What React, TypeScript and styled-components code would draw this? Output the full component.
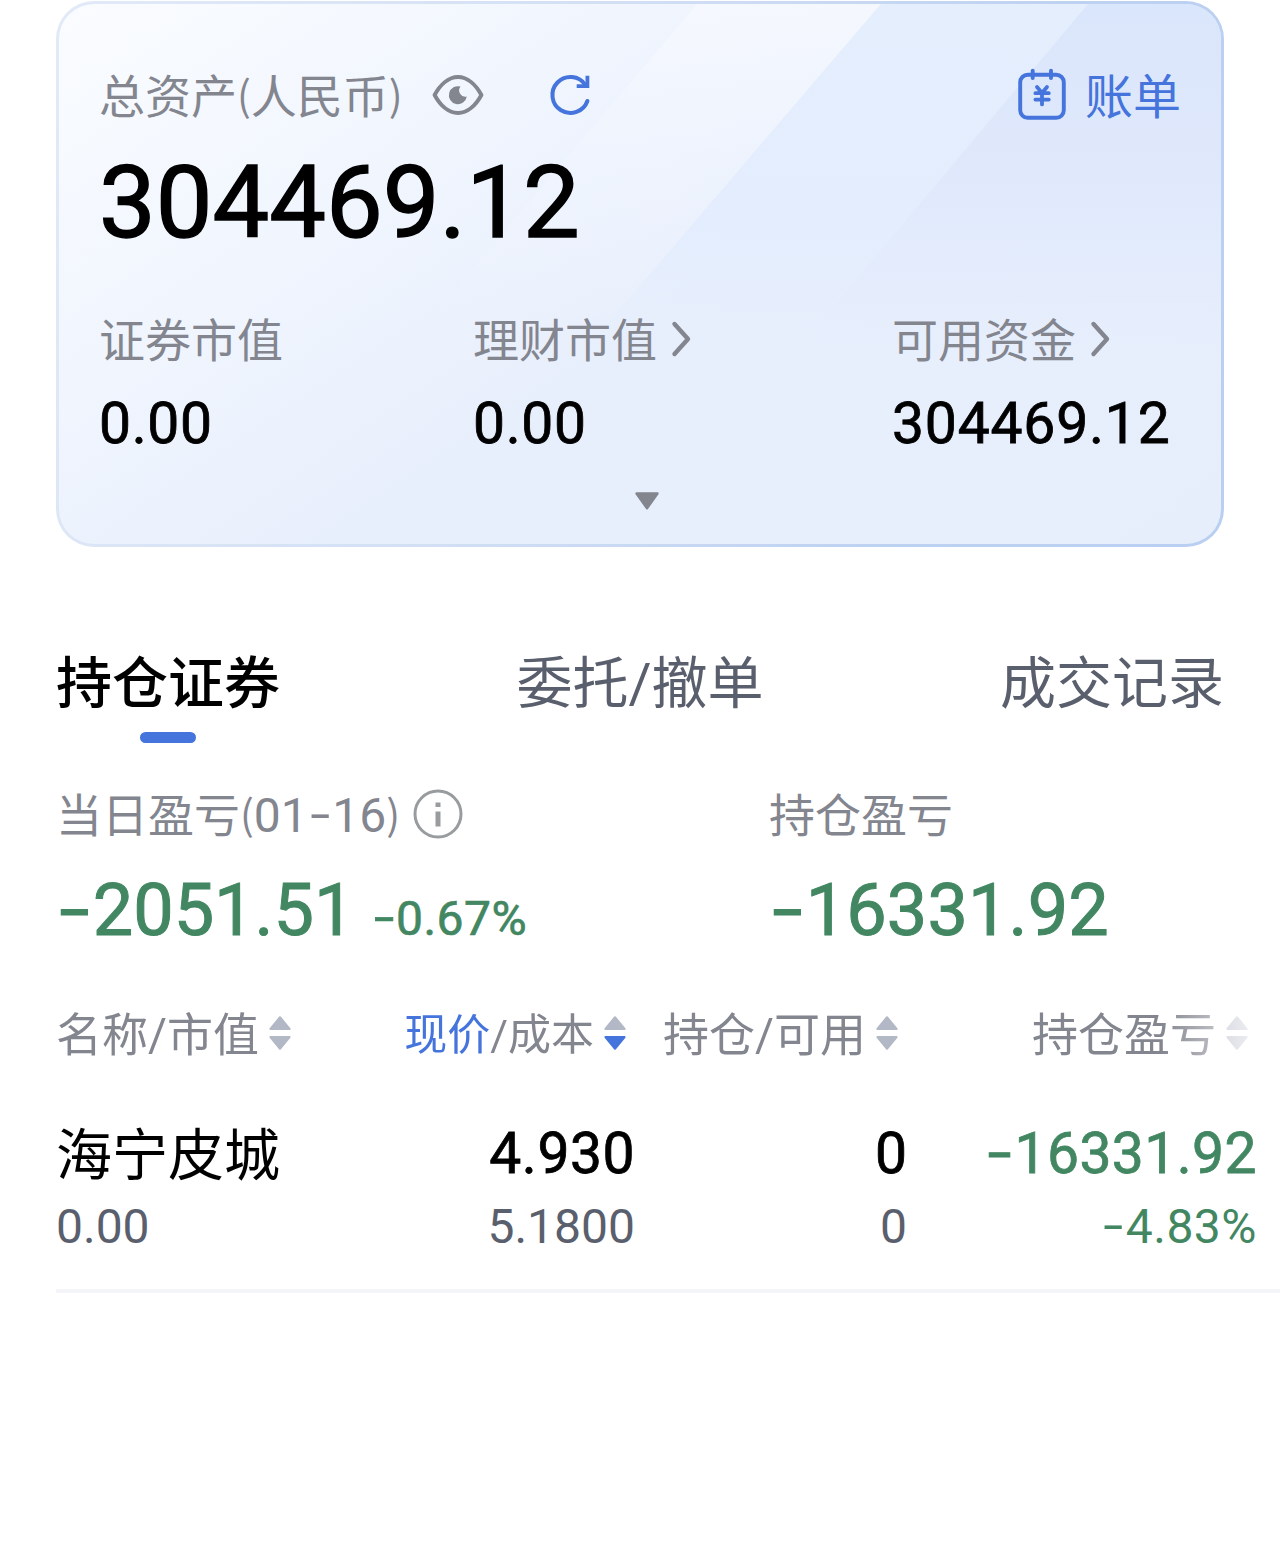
import React from "react";
import styled, { createGlobalStyle, css } from "styled-components";

const colors = {
  ink: "#000000",
  slate: "#5a5f6d",
  label: "#83858f",
  blue: "#4474dc",
  green: "#428762",
  sort: "#b3b8c6",
  info: "#999c9f",
};

const cjk = `"Noto Sans CJK SC", "Noto Sans", sans-serif`;
const din = `Roboto, "Noto Sans CJK SC", sans-serif`;

const GlobalStyle = createGlobalStyle`
  * { box-sizing: border-box; }
  html, body { margin: 0; background: #fff; }
  body { font-family: ${cjk}; overflow-x: hidden; }
`;

const Page = styled.main`
  width: 1280px;
  height: 1566px;
  padding-top: 1px;
  overflow: hidden;
  background: #fff;
`;

/* ---------- text ---------- */

const Label = styled.div<{ $size?: number; $color?: string }>`
  display: flex;
  align-items: center;
  height: 60px;
  padding-bottom: 3px;
  font: 400 ${(p) => p.$size ?? 46}px/60px ${cjk};
  color: ${(p) => p.$color ?? colors.label};
  white-space: nowrap;
`;

const Num = styled.span<{
  $size: number;
  $line: number;
  $light?: boolean;
  $color?: string;
  $track?: number;
}>`
  display: block;
  padding-top: ${(p) => (p.$size > 50 ? 1 : 0)}px;
  margin-bottom: ${(p) => (p.$size > 50 ? -1 : 0)}px;
  font: 400 ${(p) => p.$size}px/${(p) => p.$line}px ${din};
  letter-spacing: ${(p) => p.$track ?? 0}px;
  color: ${(p) => p.$color ?? colors.ink};
  -webkit-text-stroke: ${(p) => (p.$light ? "0" : "0.014em")} currentColor;
  white-space: nowrap;
`;

const Dash = styled.span`
  display: inline-block;
  width: 0.51em;
  text-align: center;
  letter-spacing: 0;
  transform: translateY(-0.02em) scaleX(1.5);
`;

const Paren = styled.span`
  display: inline-block;
  font-size: 41px;
  line-height: 0;
  transform: translateY(-2px);
`;

const Slash = styled.span`
  font-family: ${din};
  line-height: 0;
`;

function Signed({ value }: { value: string }) {
  return value.startsWith("-") ? (
    <>
      <Dash>-</Dash>
      {value.slice(1)}
    </>
  ) : (
    <>{value}</>
  );
}

/* ---------- asset card ---------- */

const Card = styled.section`
  position: relative;
  width: 1168px;
  height: 546px;
  margin-left: 56px;
  padding: 60px 40px 0 40px;
  border: 3px solid transparent;
  border-radius: 38px;
  background:
    linear-gradient(146deg, #fafcff 0%, #f1f6fe 28%, #e8effc 54%, #e6eefc 100%) padding-box,
    linear-gradient(110deg, #e2eaf8 0%, #d3e0f4 40%, #bdd1f1 75%, #b9cff2 100%) border-box;
`;

const Streak = styled.div<{ $shape: string; $fill: string }>`
  position: absolute;
  inset: 0;
  border-radius: 35px;
  clip-path: polygon(${(p) => p.$shape});
  background: ${(p) => p.$fill};
`;

const CardBody = styled.div`
  position: relative;
  display: flex;
  flex-direction: column;
`;

const CardHead = styled.header`
  display: flex;
  align-items: center;
  height: 60px;
`;

const Bill = styled.div`
  display: flex;
  align-items: center;
  gap: 18px;
  margin-left: auto;
`;

const Total = styled.div`
  margin-top: 28px;
  padding-left: 0;
`;

const Stats = styled.div`
  display: grid;
  grid-template-columns: 374px 419px auto;
  margin-top: 56px;
`;

const Stat = styled.div`
  display: flex;
  flex-direction: column;
  gap: 25px;
`;

const Expand = styled.div`
  display: flex;
  margin: 39px 0 0 536px;
`;

const Icon = styled.svg<{ $ml?: number; $mt?: number }>`
  display: block;
  flex: none;
  margin-left: ${(p) => p.$ml ?? 0}px;
  margin-top: ${(p) => p.$mt ?? 0}px;
  overflow: visible;
`;

function EyeIcon() {
  return (
    <Icon $ml={29} $mt={2} width="52" height="44" viewBox="0 0 52 44" fill="none">
      <path
        d="M2.600 22C8 12 16.500 4 26 4S44 12 49.400 22C44 32 35.500 40 26 40S8 32 2.600 22Z"
        stroke={colors.label}
        strokeWidth="4"
        strokeLinejoin="round"
      />
      <path d="M28.600 13.600A6.200 6.200 0 0 0 34.800 23.600A9 9 0 1 1 28.600 13.600Z" fill={colors.label} />
    </Icon>
  );
}

function RefreshIcon() {
  return (
    <Icon $ml={64} $mt={2} width="44" height="44" viewBox="0 0 44 44" fill="none" stroke={colors.blue}>
      <path d="M39.400 28A18 18 0 1 1 37.400 12" strokeWidth="4" strokeLinecap="round" />
      <path d="M39.400 4.600V13.200H30.600" strokeWidth="3.800" strokeLinecap="square" />
    </Icon>
  );
}

function BillIcon() {
  return (
    <Icon width="50" height="54" viewBox="0 0 50 54" fill="none" stroke={colors.blue} strokeLinecap="round">
      <rect x="3.200" y="7.800" width="43.600" height="43" rx="7.500" strokeWidth="3.900" />
      <path d="M15.700 3.600V11M34 3.600V11" strokeWidth="3.900" />
      <path
        d="M20 20L25 26L30 20M25 26V37.400M18.400 26.200H31.800M18.400 32.600H31.800"
        strokeWidth="3.800"
        strokeLinejoin="round"
      />
    </Icon>
  );
}

function Chevron() {
  return (
    <Icon $ml={13} $mt={5} width="24" height="38" viewBox="0 0 24 38" fill="none">
      <path d="M4.500 4L18 19L4.500 34" stroke={colors.label} strokeWidth="4.400" strokeLinecap="round" strokeLinejoin="round" />
    </Icon>
  );
}

/* ---------- tabs ---------- */

const Tabs = styled.nav`
  display: flex;
  justify-content: space-between;
  align-items: flex-start;
  width: 1168px;
  margin: 97px 0 0 56px;
`;

const Tab = styled.div<{ $active?: boolean }>`
  display: flex;
  flex-direction: column;
  align-items: center;
  height: 99px;
  font: 400 56px/70px ${cjk};
  color: ${colors.slate};
  white-space: nowrap;
  ${(p) =>
    p.$active &&
    css`
      font-weight: 500;
      color: ${colors.ink};
      &::after {
        content: "";
        width: 56px;
        height: 11px;
        margin-top: 18px;
        border-radius: 6px;
        background: ${colors.blue};
      }
    `}
`;

/* ---------- profit and loss ---------- */

const Profit = styled.section`
  display: grid;
  grid-template-columns: 713px auto;
  margin: 40px 0 0 56px;
`;

const ProfitCell = styled.div`
  display: flex;
  flex-direction: column;
  gap: 27px;
`;

const ProfitValue = styled.div`
  display: flex;
  align-items: baseline;
  gap: 17px;
  height: 80px;
`;

const DateText = styled.span`
  font-family: ${din};
  font-size: 48px;
  line-height: 0;
`;

function InfoIcon() {
  return (
    <Icon $ml={13} $mt={4} width="50" height="50" viewBox="0 0 50 50" fill="none">
      <circle cx="25" cy="25" r="23" stroke={colors.info} strokeWidth="3" />
      <path d="M22.500 13.500H27.500V18H22.500ZM22.500 22.600H27.500V37.600H22.500Z" fill={colors.info} />
    </Icon>
  );
}

/* ---------- holdings table ---------- */

const Table = styled.section`
  margin: 52px 0 0 56px;
  border-bottom: 4px solid #f4f5f9;
`;

const gridColumns = css`
  display: grid;
  grid-template-columns: 305px 274px 272px 350px;
`;

const HeadRow = styled.div`
  ${gridColumns}
  mask-image: linear-gradient(90deg, #000 1104px, transparent 1224px);
`;

const HeadCell = styled.div<{ $left?: boolean }>`
  display: flex;
  align-items: center;
  justify-content: ${(p) => (p.$left ? "flex-start" : "flex-end")};
  gap: 10px;
  padding-right: 9px;
`;

const Active = styled.span`
  color: ${colors.blue};
`;

const BodyRow = styled.div`
  ${gridColumns}
  height: 227px;
  padding-top: 56px;
`;

const BodyCell = styled.div<{ $left?: boolean }>`
  display: flex;
  flex-direction: column;
  align-items: ${(p) => (p.$left ? "flex-start" : "flex-end")};
  gap: 9px;
`;

const StockName = styled.span`
  margin-bottom: 4px;
  font: 400 56px/66px ${cjk};
  color: ${colors.ink};
`;

function SortIcon({ down }: { down?: boolean }) {
  return (
    <Icon $mt={2} width="22" height="34" viewBox="0 0 22 34" strokeWidth="2" strokeLinejoin="round">
      <path d="M11 1.200L20.600 13H1.400Z" fill={colors.sort} stroke={colors.sort} />
      <path
        d="M11 32.800L20.600 21H1.400Z"
        fill={down ? colors.blue : colors.sort}
        stroke={down ? colors.blue : colors.sort}
      />
    </Icon>
  );
}

export default function App() {
  return (
    <Page>
      <GlobalStyle />
      <Card>
        <Streak
          $shape="638px 0, 822px 0, 394px 500px, 214px 500px"
          $fill="linear-gradient(180deg, rgba(247,249,255,.75) 0, rgba(240,245,254,.6) 150px, rgba(234,241,253,0) 320px)"
        />
        <Streak
          $shape="822px 0, 1029px 0, 608px 500px, 394px 500px"
          $fill="linear-gradient(180deg, #e4eefd 0, #e3edfd 220px, rgba(230,238,252,0) 350px)"
        />
        <Streak
          $shape="1029px 0, 100% 0, 100% 400px, 692px 400px"
          $fill="linear-gradient(180deg, #dae6fb 0, #dfe8fb 140px, #e2ebfc 230px, rgba(231,238,252,0) 350px)"
        />
        <CardBody>
          <CardHead>
            <Label><span>总资产<Paren>(</Paren>人民币<Paren>)</Paren></span></Label>
            <EyeIcon />
            <RefreshIcon />
            <Bill>
              <BillIcon />
              <Label $size={48} $color={colors.blue}>账单</Label>
            </Bill>
          </CardHead>
          <Total>
            <Num $size={101} $line={100}>304469.12</Num>
          </Total>
          <Stats>
            <Stat>
              <Label>证券市值</Label>
              <Num $size={57} $line={60} $track={0.6}>0.00</Num>
            </Stat>
            <Stat>
              <Label>理财市值<Chevron /></Label>
              <Num $size={57} $line={60} $track={0.6}>0.00</Num>
            </Stat>
            <Stat>
              <Label>可用资金<Chevron /></Label>
              <Num $size={57} $line={60} $track={0.8}>304469.12</Num>
            </Stat>
          </Stats>
          <Expand>
            <Icon width="24" height="18" viewBox="0 0 24 18">
              <path
                d="M1.500 1.500H22.500L12 16.300Z"
                fill={colors.label}
                stroke={colors.label}
                strokeWidth="2.400"
                strokeLinejoin="round"
              />
            </Icon>
          </Expand>
        </CardBody>
      </Card>

      <Tabs>
        <Tab $active>持仓证券</Tab>
        <Tab><span>委托<Slash>/</Slash>撤单</span></Tab>
        <Tab>成交记录</Tab>
      </Tabs>

      <Profit>
        <ProfitCell>
          <Label>
            <span>当日盈亏<Paren>(</Paren><DateText>01<Dash>-</Dash>16</DateText><Paren>)</Paren></span>
            <InfoIcon />
          </Label>
          <ProfitValue>
            <Num $size={72} $line={80} $color={colors.green}><Signed value="-2051.51" /></Num>
            <Num $size={48} $line={80} $track={0.5} $color={colors.green}><Signed value="-0.67%" /></Num>
          </ProfitValue>
        </ProfitCell>
        <ProfitCell>
          <Label>持仓盈亏</Label>
          <ProfitValue>
            <Num $size={72} $line={80} $track={0.1} $color={colors.green}><Signed value="-16331.92" /></Num>
          </ProfitValue>
        </ProfitCell>
      </Profit>

      <Table>
        <HeadRow>
          <HeadCell $left><Label><span>名称<Slash>/</Slash>市值</span></Label><SortIcon /></HeadCell>
          <HeadCell><Label $size={43}><span><Active>现价</Active><Slash>/</Slash>成本</span></Label><SortIcon down /></HeadCell>
          <HeadCell><Label><span>持仓<Slash>/</Slash>可用</span></Label><SortIcon /></HeadCell>
          <HeadCell><Label>持仓盈亏</Label><SortIcon /></HeadCell>
        </HeadRow>
        <BodyRow>
          <BodyCell $left>
            <StockName>海宁皮城</StockName>
            <Num $size={48} $line={60} $light $color={colors.slate}>0.00</Num>
          </BodyCell>
          <BodyCell>
            <Num $size={57} $line={70} $track={0.5}>4.930</Num>
            <Num $size={48} $line={60} $light $color={colors.slate}>5.1800</Num>
          </BodyCell>
          <BodyCell>
            <Num $size={57} $line={70}>0</Num>
            <Num $size={48} $line={60} $light $color={colors.slate}>0</Num>
          </BodyCell>
          <BodyCell>
            <Num $size={57} $line={70} $track={0.4} $color={colors.green}><Signed value="-16331.92" /></Num>
            <Num $size={48} $line={60} $light $track={0.5} $color={colors.green}><Signed value="-4.83%" /></Num>
          </BodyCell>
        </BodyRow>
      </Table>
    </Page>
  );
}
